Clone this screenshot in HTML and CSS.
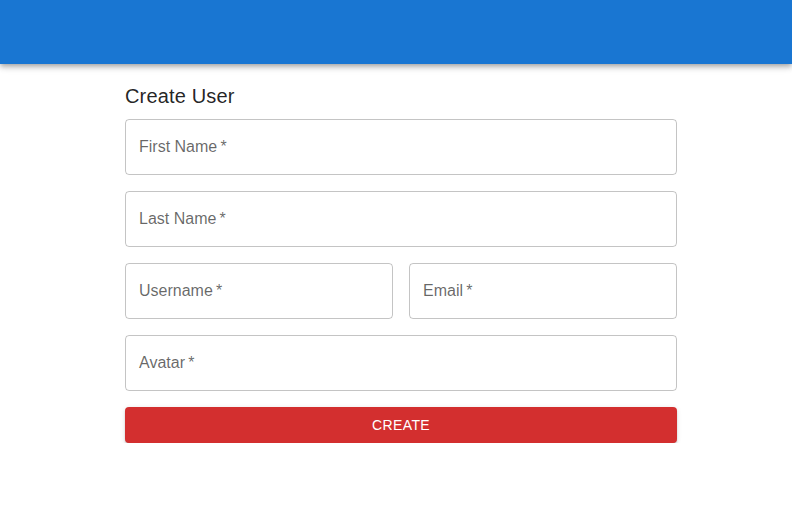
FILE: index.html
```html
<!DOCTYPE html>
<html>
<head>
<meta charset="utf-8">
<link rel="stylesheet" href="styles.css">
</head>
<body>
<header class="appbar"></header>
<main class="content">
  <h1 class="title">Create User</h1>
  <form class="form">
    <div class="field"><span class="label">First Name&thinsp;*</span></div>
    <div class="field"><span class="label">Last Name&thinsp;*</span></div>
    <div class="row">
      <div class="field"><span class="label">Username&thinsp;*</span></div>
      <div class="field"><span class="label">Email&thinsp;*</span></div>
    </div>
    <div class="field"><span class="label">Avatar&thinsp;*</span></div>
    <button type="button" class="btn">Create</button>
  </form>
</main>
</body>
</html>
```
FILE: styles.css
```css
* { box-sizing: border-box; }
html, body { margin: 0; padding: 0; background: #fff; }
body {
  font-family: "Liberation Sans", Arial, sans-serif;
  color: rgba(0,0,0,0.87);
}
.appbar {
  height: 64px;
  background: #1976d2;
  box-shadow: 0 2px 4px -1px rgba(0,0,0,0.2), 0 4px 5px 0 rgba(0,0,0,0.14), 0 1px 10px 0 rgba(0,0,0,0.12);
  position: relative;
}
.content {
  width: 552px;
  margin-left: 125px;
  padding-top: 16px;
}
.title {
  margin: 0 0 7px;
  font-size: 20px;
  font-weight: 400;
  line-height: 32px;
  letter-spacing: 0.0075em;
}
.form {
  display: flex;
  flex-direction: column;
  gap: 16px;
}
.row {
  display: grid;
  grid-template-columns: 1fr 1fr;
  gap: 16px;
}
.field {
  height: 56px;
  border: 1px solid rgba(0,0,0,0.23);
  border-radius: 4px;
  display: flex;
  align-items: center;
  padding: 0 13px 2px;
}
.label {
  font-size: 16px;
  color: rgba(0,0,0,0.6);
  line-height: 23px;
}
.btn {
  height: 36px;
  border: 0;
  border-radius: 4px;
  background: #d32f2f;
  color: #fff;
  font-family: inherit;
  font-size: 14px;
  text-transform: uppercase;
  letter-spacing: 0.02857em;
  box-shadow: 0 3px 1px -2px rgba(0,0,0,0.2), 0 2px 2px 0 rgba(0,0,0,0.14), 0 1px 5px 0 rgba(0,0,0,0.12);
  cursor: pointer;
}
```
